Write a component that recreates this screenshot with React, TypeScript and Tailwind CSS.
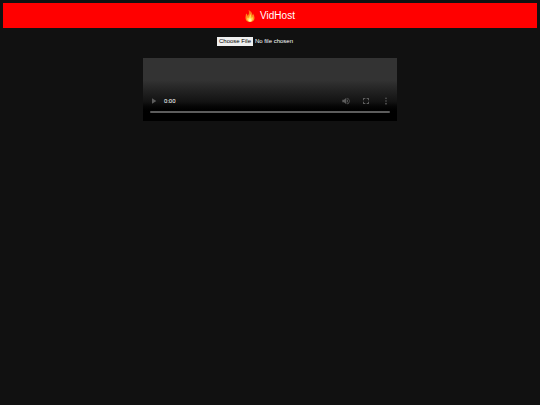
import { useRef, useState } from 'react'

function FlameIcon() {
  return (
    <svg viewBox="0 0 20 24" className="h-3 w-[10px]" role="img" aria-label="Fire">
      <defs>
        <linearGradient id="flame" x1="0" y1="0" x2="0" y2="1">
          <stop offset="0" stopColor="#ff6a14" />
          <stop offset="0.5" stopColor="#ff8a1c" />
          <stop offset="1" stopColor="#ff9d24" />
        </linearGradient>
      </defs>
      <path
        fill="url(#flame)"
        d="M7 0c5 2 8 6 8 11 1-1 1-3 1-4 2 3 3 6 3 9 0 5-4 8-9 8s-9-3-9-8c0-4 1-6 1-9 2 1 3 3 3 5 3-3 4-7 2-12z"
      />
      <path
        fill="#ffd84f"
        d="M10 8c3 3 2 6 3 8l2-2c2 5-1 9-5 9s-7-4-5-8l2 1c1-2 3-4 3-8z"
      />
      <path fill="#fff3a8" d="M10 16c2 2 3 3 3 5s-1 2-3 2-3-1-3-3 2-2 3-4z" />
    </svg>
  )
}

function PlayIcon() {
  return (
    <svg viewBox="0 0 24 24" className="size-2" fill="currentColor" aria-hidden="true">
      <path d="M6 4v16l13-8z" />
    </svg>
  )
}

function VolumeIcon() {
  return (
    <svg viewBox="0 0 24 24" className="size-2" fill="currentColor" aria-hidden="true">
      <path d="M1 8v8h5l7 6V2L6 8zM15 7v10c2-1 3-3 3-5s-1-4-3-5zM15 2v2.500c4 1 6 4 6 7.500s-2 6.500-6 7.500V22c5-1 8-5 8-10S20 3 15 2z" />
    </svg>
  )
}

function FullscreenIcon() {
  return (
    <svg viewBox="0 0 24 24" className="size-2" fill="currentColor" aria-hidden="true">
      <path d="M3 3h7v3H6v4H3zM14 3h7v7h-3V6h-4zM3 14h3v4h4v3H3zM18 14h3v7h-7v-3h4z" />
    </svg>
  )
}

function MoreIcon() {
  return (
    <svg viewBox="0 0 24 24" className="size-2" fill="currentColor" aria-hidden="true">
      <circle cx="12" cy="4" r="2.5" />
      <circle cx="12" cy="12" r="2.5" />
      <circle cx="12" cy="20" r="2.5" />
    </svg>
  )
}

const ICON_BUTTON = 'flex size-3 items-center justify-center text-[#5c5c5c]'

interface PlayerProps { src?: string }

function VideoPlayer({ src }: PlayerProps) {
  const video = useRef<HTMLVideoElement>(null)
  const [time, setTime] = useState(0)
  const [duration, setDuration] = useState(0)

  const togglePlay = () => {
    const el = video.current
    if (!el || !src) return
    if (el.paused) el.play()
    else el.pause()
  }
  const seek = (value: number) => {
    if (video.current && src) video.current.currentTime = value
  }

  const minutes = Math.floor(time / 60)
  const seconds = String(Math.floor(time % 60)).padStart(2, '0')

  return (
    <section
      aria-label="Video player"
      className="mx-auto mt-3 w-full max-w-[254px] bg-linear-to-b from-[#333333] from-35% via-[#121212] via-70% to-black to-90%"
    >
      {/* Picture area, collapsed until a file is picked */}
      <video
        ref={video}
        src={src}
        className={src ? 'w-full' : 'h-[37px] w-full'}
        onTimeUpdate={(e) => setTime(e.currentTarget.currentTime)}
        onLoadedMetadata={(e) => setDuration(e.currentTarget.duration)}
      />

      {/* Buttons */}
      <div className="flex h-3 items-center px-[5px]">
        <button type="button" aria-label="Play" onClick={togglePlay} className={ICON_BUTTON}>
          <PlayIcon />
        </button>
        <span className="ml-1 font-[Roboto,sans-serif] text-[6px] leading-3 text-white">
          {minutes}:{seconds}
        </span>
        <div className="ml-auto flex gap-2">
          <button type="button" aria-label="Mute" className={ICON_BUTTON}><VolumeIcon /></button>
          <button type="button" aria-label="Full screen" className={ICON_BUTTON}><FullscreenIcon /></button>
          <button type="button" aria-label="More options" className={ICON_BUTTON}><MoreIcon /></button>
        </div>
      </div>

      {/* Timeline */}
      <div className="flex h-[14px] items-start px-[7px] pt-1">
        <input
          type="range"
          aria-label="Seek"
          min={0}
          max={duration}
          value={time}
          onChange={(e) => seek(Number(e.target.value))}
          className="h-[2px] w-full appearance-none rounded-full bg-[#5c5c5c] [&::-webkit-slider-thumb]:size-0 [&::-webkit-slider-thumb]:appearance-none"
        />
      </div>
    </section>
  )
}

export default function App() {
  const [src, setSrc] = useState<string>()

  const pickFile = (file?: File) => {
    setSrc(file ? URL.createObjectURL(file) : undefined)
  }

  return (
    <div className="min-h-screen bg-[#111111] p-[3px] font-['Liberation_Sans',Arial,sans-serif] text-white">
      <header className="flex h-[25px] items-center justify-center gap-[5px] bg-[#ff0000]">
        <FlameIcon />
        <h1 className="text-[10px] leading-3">VidHost</h1>
      </header>

      <main>
        <div className="mt-[9px] flex justify-center">
          <input
            type="file"
            accept="video/*"
            aria-label="Choose a video"
            onChange={(e) => pickFile(e.target.files?.[0])}
            className="h-[9px] w-[106px] text-[6px] leading-[9px] file:mr-[2px] file:h-[9px] file:w-[36px] file:bg-[#efefef] file:p-0 file:text-center file:leading-[9px] file:text-black"
          />
        </div>
        <VideoPlayer src={src} />
      </main>
    </div>
  )
}
